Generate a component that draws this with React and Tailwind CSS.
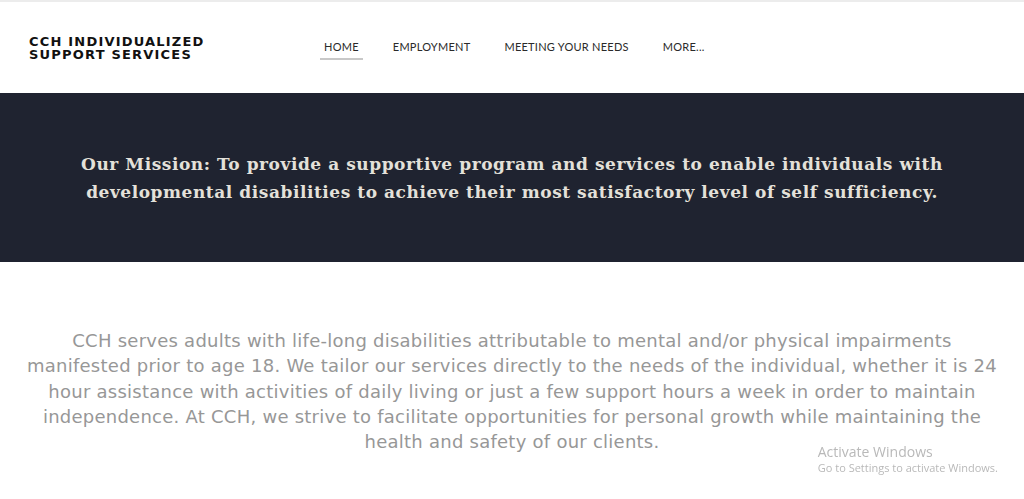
export default function App() {
  const nav = ['HOME', 'EMPLOYMENT', 'MEETING YOUR NEEDS', 'MORE...']

  return (
    <div className="min-h-screen bg-white">
      <header className="flex h-[93px] items-center border-t-2 border-[#ececec] pl-[29px]">
        <div className="w-[295px] text-[13px] font-bold leading-[13px] tracking-[1.2px] text-[#111] [font-family:'DejaVu_Sans',sans-serif]">
          CCH INDIVIDUALIZED
          <br />
          SUPPORT SERVICES
        </div>
        <nav className="flex items-center gap-[34px] pt-[4px]">
          {nav.map((item, i) => (
            <a
              key={item}
              className={
                'border-b-2 pb-[3px] text-[11px] tracking-[0.25px] text-[#2a2a2a] [font-family:Lato,sans-serif] ' +
                (i === 0 ? '-mx-[4px] border-[#c8c8c8] px-[4px]' : 'border-transparent')
              }
            >
              {item}
            </a>
          ))}
        </nav>
      </header>

      <section className="flex h-[169px] items-center justify-center bg-[#1f2330] pt-[1px]">
        <p className="text-center text-[17px] font-bold leading-[28px] tracking-[0.55px] text-[#e4e1da] [font-family:'DejaVu_Serif',serif]">
          Our Mission: To provide a supportive program and services to enable individuals with
          <br />
          developmental disabilities to achieve their most satisfactory level of self sufficiency.
        </p>
      </section>

      <section className="pt-[66px] text-center text-[18px] leading-[25.3px] tracking-[0.25px] text-[#979797] [font-family:'DejaVu_Sans',sans-serif]">
        CCH serves adults with life-long disabilities attributable to mental and/or physical impairments
        <br />
        manifested prior to age 18. We tailor our services directly to the needs of the individual, whether it is 24
        <br />
        hour assistance with activities of daily living or just a few support hours a week in order to maintain
        <br />
        independence. At CCH, we strive to facilitate opportunities for personal growth while maintaining the
        <br />
        health and safety of our clients.
      </section>

      <div className="fixed bottom-[24px] right-[26px] text-[#b9b9b9] [font-family:'Open_Sans',sans-serif]">
        <div className="text-[14px] leading-[18px]">Activate Windows</div>
        <div className="text-[11px] leading-[14px]">Go to Settings to activate Windows.</div>
      </div>
    </div>
  )
}
